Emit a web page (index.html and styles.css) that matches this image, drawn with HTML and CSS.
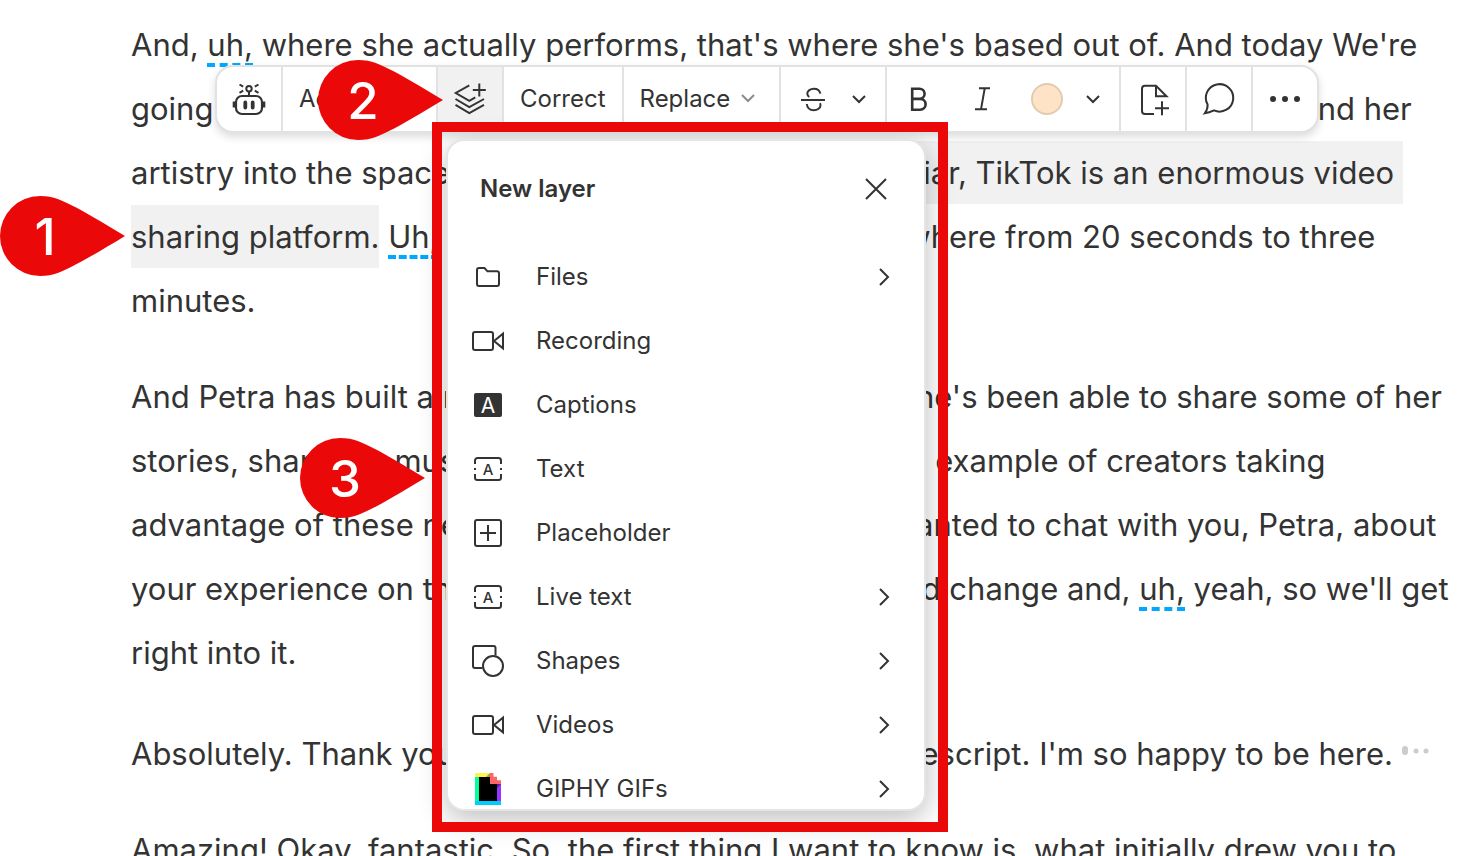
FILE: index.html
```html
<!DOCTYPE html>
<html lang="en">
<head>
    <meta charset="UTF-8">
    <meta name="viewport" content="width=device-width, initial-scale=1.0">
    <title>Script editor - New layer</title>
    <link rel="stylesheet" href="styles.css">
</head>
<body>
    <main class="script">
        <p>
            And, <span class="filler">uh,</span> where she actually performs, that's where she's based out of. And today We're<br>
            going to be chatting about how she has been able to really turn her songwriting and her<br>
            artistry into the space that is TikTok. <mark>If you are unfamiliar, TikTok is an enormous video&nbsp;</mark><br>
            <mark>sharing platform.</mark> <span class="filler">Uh,</span> users share videos that are anywhere from 20 seconds to three<br>
            minutes.
        </p>
        <p>
            And Petra has built a massive community there, and she's been able to share some of her<br>
            stories, share her music, and she is such a really great example of creators taking<br>
            advantage of these new online platforms. And I just wanted to chat with you, Petra, about<br>
            your experience on there, the ways you've evolved and change and, <span class="filler">uh,</span> yeah, so we'll get<br>
            right into it.
        </p>
        <p class="new-speaker">
            Absolutely. Thank you so much for having me on, at Descript. I'm so happy to be here.
            <svg class="pause" viewBox="0 0 28 10" aria-hidden="true">
                <rect x="0" y="0" width="6" height="9" rx="3"/>
                <circle cx="14" cy="5" r="2.5"/>
                <circle cx="24" cy="5" r="2.5"/>
            </svg>
        </p>
        <p>
            Amazing! Okay, fantastic. So, the first thing I want to know is, what initially drew you to
        </p>
    </main>

    <!-- Floating toolbar -->
    <div class="toolbar" role="toolbar" aria-label="Selection">
        <div class="group">
            <button class="tool" aria-label="AI tools">
                <svg class="icon" viewBox="0 0 32 32">
                    <rect x="3" y="13" width="26" height="18" rx="6" stroke-width="2.2"/>
                    <path d="M1 18.5v6M31 18.5v6" stroke-width="2.6"/>
                    <path d="M12.3 19.5v5M19.7 19.5v5" stroke-width="3.8" stroke-linecap="round"/>
                    <circle cx="16" cy="5.7" r="2.7"/>
                    <path d="M16 8.5V13M6.5 1.5l3.7 2.2M6.5 9.8l3.7-2.2M25.5 1.5l-3.7 2.2M25.5 9.8l-3.7-2.2"/>
                </svg>
            </button>
        </div>
        <div class="group">
            <button class="tool menu-tool actions">
                Actions
                <svg class="chevron" viewBox="0 0 16 16"><path d="M2 5l6 6 6-6"/></svg>
            </button>
        </div>
        <div class="group">
            <button class="tool active" aria-label="Add layer" aria-expanded="true">
                <svg class="icon" viewBox="0 0 32 32">
                    <path d="M15.3 2.3L1.8 10l13.5 7.8 6-3.4M1.5 16l13.8 8.2L30 16M1.5 21.8L15.3 30 30 21.8M25.3 .5v13M18.8 7h13"/>
                </svg>
            </button>
        </div>
        <div class="group">
            <button class="tool text-tool">Correct</button>
        </div>
        <div class="group">
            <button class="tool menu-tool">
                Replace
                <svg class="chevron" viewBox="0 0 16 16"><path d="M2 5l6 6 6-6"/></svg>
            </button>
        </div>
        <div class="group with-caret">
            <button class="tool" aria-label="Strikethrough">
                <svg class="icon" viewBox="0 0 32 32">
                    <path d="M4 17h24M23.3 10.7c-.5-2.9-3.1-4.9-6.5-4.9s-6.5 2-6.5 4.7c0 1.5.7 2.7 2 3.5M9.8 21c.4 3.9 3.2 6.2 7 6.2s6.7-2.2 6.7-4.9c0-1-.2-1.6-.5-2.1"/>
                </svg>
            </button>
            <button class="tool caret" aria-label="Strikethrough options">
                <svg class="chevron" viewBox="0 0 16 16"><path d="M2 5l6 6 6-6"/></svg>
            </button>
        </div>
        <div class="group with-caret">
            <button class="tool" aria-label="Bold">
                <svg class="icon" viewBox="0 0 32 32">
                    <path d="M9.2 5.7h7.3a5.1 5.1 0 0 1 0 10.2H9.2zM9.2 15.9h8a5.4 5.4 0 0 1 0 10.8h-8z" stroke-width="2.6"/>
                </svg>
            </button>
            <button class="tool" aria-label="Italic">
                <svg class="icon" viewBox="0 0 32 32">
                    <path d="M12 5.3h11M8 26.3h12M17.7 5.3L14 26.3"/>
                </svg>
            </button>
            <button class="tool" aria-label="Highlight colour">
                <span class="swatch"></span>
            </button>
            <button class="tool caret" aria-label="More colours">
                <svg class="chevron" viewBox="0 0 16 16"><path d="M2 5l6 6 6-6"/></svg>
            </button>
        </div>
        <div class="group">
            <button class="tool" aria-label="Add scene">
                <svg class="icon" viewBox="0 0 32 32">
                    <path d="M17 31H8a3 3 0 0 1-3-3V5.7a3 3 0 0 1 3-3h11l10.5 10.6H19V2.7M25 18.3v14M18 25.3h14"/>
                </svg>
            </button>
        </div>
        <div class="group">
            <button class="tool" aria-label="Comment">
                <svg class="icon" viewBox="0 0 32 32">
                    <path d="M1.8 30.3c2-2.6 3-5.3 2.8-8.7A13.7 13.7 0 1 1 11 27.4c-3 1.4-5.7 2.4-9.2 2.9z"/>
                </svg>
            </button>
        </div>
        <div class="group">
            <button class="tool" aria-label="More">
                <svg class="icon filled" viewBox="0 0 32 32">
                    <circle cx="4" cy="16" r="3"/>
                    <circle cx="16" cy="16" r="3"/>
                    <circle cx="28" cy="16" r="3"/>
                </svg>
            </button>
        </div>
    </div>

    <!-- New layer menu -->
    <section class="popover">
        <header class="popover-header">
            <h2>New layer</h2>
            <button class="close" aria-label="Close">
                <svg class="icon" viewBox="0 0 32 32"><path d="M6 6l20 20M26 6L6 26"/></svg>
            </button>
        </header>
        <div class="items">
            <button class="item">
                <svg class="icon" viewBox="0 0 32 32">
                    <path d="M5 23V9a2 2 0 0 1 2-2h5.5l3 3.3H25a2 2 0 0 1 2 2V23a2 2 0 0 1-2 2H7a2 2 0 0 1-2-2z"/>
                </svg>
                <span class="label">Files</span>
                <svg class="next" viewBox="0 0 16 16"><path d="M4 0l8 8-8 8"/></svg>
            </button>
            <button class="item">
                <svg class="icon" viewBox="0 0 32 32">
                    <rect x="1" y="7" width="20" height="18" rx="2"/>
                    <path d="M22 16l9-7.3v14.6z"/>
                </svg>
                <span class="label">Recording</span>
            </button>
            <button class="item">
                <svg class="icon filled" viewBox="0 0 32 32">
                    <rect x="2" y="4" width="28" height="24" rx="2"/>
                    <text class="letter inverse" x="16" y="23.5">A</text>
                </svg>
                <span class="label">Captions</span>
            </button>
            <button class="item">
                <svg class="icon" viewBox="0 0 32 32">
                    <path d="M3 11V7.5A2.5 2.5 0 0 1 5.5 5h21A2.5 2.5 0 0 1 29 7.5V11M3 21v3.5A2.5 2.5 0 0 0 5.500 27h21a2.5 2.5 0 0 0 2.5-2.5V21M3 15v2M29 15v2"/>
                    <text class="letter" x="16" y="21.5">A</text>
                </svg>
                <span class="label">Text</span>
            </button>
            <button class="item">
                <svg class="icon" viewBox="0 0 32 32">
                    <rect x="3" y="3" width="26" height="26" rx="2"/>
                    <path d="M16 8v16M8 16h16"/>
                </svg>
                <span class="label">Placeholder</span>
            </button>
            <button class="item">
                <svg class="icon" viewBox="0 0 32 32">
                    <path d="M3 11V7.5A2.5 2.5 0 0 1 5.5 5h21A2.5 2.5 0 0 1 29 7.5V11M3 21v3.5A2.5 2.5 0 0 0 5.500 27h21a2.5 2.5 0 0 0 2.5-2.5V21M3 15v2M29 15v2"/>
                    <text class="letter" x="16" y="21.5">A</text>
                </svg>
                <span class="label">Live text</span>
                <svg class="next" viewBox="0 0 16 16"><path d="M4 0l8 8-8 8"/></svg>
            </button>
            <button class="item">
                <svg class="icon" viewBox="0 0 32 32">
                    <path d="M10.5 23H3a2 2 0 0 1-2-2V3a2 2 0 0 1 2-2h18.5a2 2 0 0 1 2 2v7.5"/>
                    <circle cx="21" cy="21" r="10"/>
                </svg>
                <span class="label">Shapes</span>
                <svg class="next" viewBox="0 0 16 16"><path d="M4 0l8 8-8 8"/></svg>
            </button>
            <button class="item">
                <svg class="icon" viewBox="0 0 32 32">
                    <rect x="1" y="7" width="20" height="18" rx="2"/>
                    <path d="M22 16l9-7.3v14.6z"/>
                </svg>
                <span class="label">Videos</span>
                <svg class="next" viewBox="0 0 16 16"><path d="M4 0l8 8-8 8"/></svg>
            </button>
            <button class="item">
                <svg class="icon giphy" viewBox="0 0 32 32">
                    <path fill="#000000" d="M7 4h18v24H7z"/>
                    <path fill="#fff152" d="M3 0h15v4H3z"/>
                    <path fill="#00ff99" d="M3 4h4v24H3z"/>
                    <path fill="#00ccff" d="M3 28h26v4H3z"/>
                    <path fill="#9933ff" d="M25 11h4v17h-4z"/>
                    <path fill="#5a1f99" d="M25 11h4l-4 4z"/>
                    <path fill="#a89c30" d="M18 0v4h-4z"/>
                    <path fill="#ff6666" d="M18 0h3.5v3.7H25v3.6h4V11H18z"/>
                </svg>
                <span class="label">GIPHY GIFs</span>
                <svg class="next" viewBox="0 0 16 16"><path d="M4 0l8 8-8 8"/></svg>
            </button>
        </div>
    </section>

    <!-- Numbered callouts -->
    <div class="frame"></div>
    <div class="callout step-1">
        <svg viewBox="0 0 126 80"><path d="M40 0C54 0 63 5 71 9C84 15.5 102 26 125 40C102 54 84 64.5 71 71C63 75 54 80 40 80A40 40 0 0 1 40 0z"/></svg>
        <span>1</span>
    </div>
    <div class="callout step-2">
        <svg viewBox="0 0 126 80"><path d="M40 0C54 0 63 5 71 9C84 15.5 102 26 125 40C102 54 84 64.5 71 71C63 75 54 80 40 80A40 40 0 0 1 40 0z"/></svg>
        <span>2</span>
    </div>
    <div class="callout step-3">
        <svg viewBox="0 0 126 80"><path d="M40 0C54 0 63 5 71 9C84 15.5 102 26 125 40C102 54 84 64.5 71 71C63 75 54 80 40 80A40 40 0 0 1 40 0z"/></svg>
        <span>3</span>
    </div>
</body>
</html>
```
FILE: styles.css
```css
* {
    box-sizing: border-box;
}

body {
    margin: 0;
    height: 100vh;
    overflow: hidden;
    position: relative;
    background-color: #fff;
    color: #333;
    font-family: "Inter", sans-serif;
}

button {
    border: none;
    background: none;
    padding: 0;
    color: inherit;
    font: inherit;
    cursor: pointer;
}

/* Script text */
.script {
    padding: 13px 0 0 131px;
    font-size: 31px;
    line-height: 64px;
    white-space: nowrap;
}

.script p {
    margin: 0 0 32px;
}

.script .new-speaker {
    margin-top: 37px;
}

.script mark {
    padding: 13px 0;
    background-color: #f1f1f1;
    color: inherit;
}

.filler {
    border-bottom: 4px dashed #00a8ff;
}

.pause {
    width: 28px;
    height: 10px;
    vertical-align: 9px;
    fill: #ccc;
}

/* Icons */
.icon {
    display: block;
    flex: none;
    width: 32px;
    height: 32px;
    overflow: visible;
    fill: none;
    stroke: #333;
    stroke-width: 2;
}

.icon.filled {
    fill: #333;
    stroke: none;
}

.icon.giphy {
    stroke: none;
}

.letter {
    font-size: 15px;
    font-weight: 500;
    text-anchor: middle;
    fill: #333;
    stroke: none;
}

.letter.inverse {
    font-size: 21px;
    font-weight: 400;
    fill: #fff;
}

.chevron,
.next {
    flex: none;
    width: 16px;
    height: 16px;
    overflow: visible;
    fill: none;
    stroke: #333;
    stroke-width: 2;
}

/* Toolbar */
.toolbar {
    position: absolute;
    top: 65px;
    left: 215px;
    display: flex;
    height: 68px;
    border: 2px solid #e2e2e2;
    border-radius: 18px;
    background-color: #fff;
    box-shadow: 0 4px 8px rgba(0, 0, 0, 0.14);
    font-size: 24px;
    overflow: hidden;
}

.group {
    display: flex;
    border-right: 2px solid #e2e2e2;
}

.group:last-child {
    border-right: none;
}

.with-caret {
    padding-right: 12px;
}

.tool {
    display: flex;
    align-items: center;
    justify-content: center;
    width: 64px;
}

.tool.active {
    background-color: #f1f1f1;
}

.tool.caret {
    width: 28px;
}

.text-tool {
    width: auto;
    padding: 0 16px 2px;
}

.menu-tool {
    width: auto;
    gap: 10px;
    padding: 0 23px 2px 16px;
}

.menu-tool .chevron {
    stroke: #8c8c8c;
}

.actions {
    min-width: 153px;
    justify-content: space-between;
}

.swatch {
    width: 32px;
    height: 32px;
    border: 2px solid #e3cbb0;
    border-radius: 50%;
    background-color: #ffe3c7;
}

/* New layer popover */
.popover {
    position: absolute;
    top: 139px;
    left: 446px;
    width: 480px;
    height: 672px;
    border: 2px solid #e5e5e5;
    border-radius: 18px;
    background-color: #fff;
    box-shadow: 0 8px 28px rgba(0, 0, 0, 0.26);
    font-size: 24px;
    overflow: hidden;
}

.popover-header {
    display: flex;
    justify-content: space-between;
    align-items: center;
    padding: 32px 32px 40px;
}

.popover-header h2 {
    margin: 0;
    font-size: 24px;
    font-weight: 600;
    line-height: 32px;
}

.item {
    display: flex;
    align-items: center;
    width: 100%;
    height: 64px;
    padding: 0 32px 0 24px;
    text-align: left;
}

.item .label {
    flex: 1;
    margin-left: 32px;
    padding-bottom: 2px;
}

/* Callouts */
.frame {
    position: absolute;
    top: 122px;
    left: 432px;
    width: 516px;
    height: 710px;
    border: 10px solid #eb0808;
    pointer-events: none;
}

.callout {
    position: absolute;
    width: 126px;
    height: 80px;
    color: #fff;
    font-size: 51px;
    font-weight: 500;
    line-height: 80px;
}

.callout svg {
    display: block;
    width: 126px;
    height: 80px;
    fill: #eb0808;
}

.callout span {
    position: absolute;
    top: 1px;
    left: 0;
    width: 90px;
    text-align: center;
}

.step-1 {
    top: 196px;
    left: 0;
}

.step-2 {
    top: 60px;
    left: 318px;
}

.step-3 {
    top: 438px;
    left: 300px;
}
```
